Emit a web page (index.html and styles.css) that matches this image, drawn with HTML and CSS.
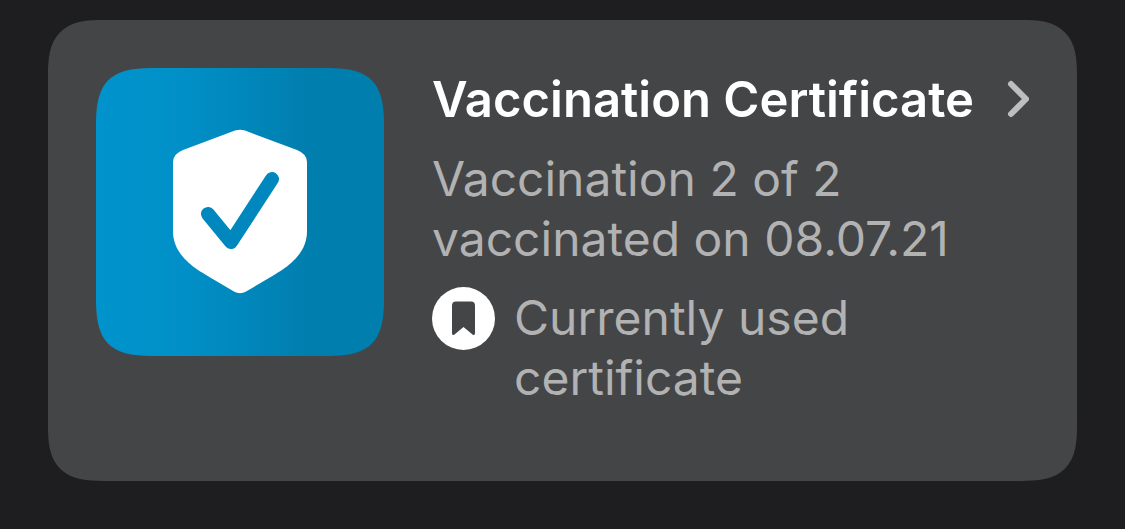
FILE: index.html
```
<!DOCTYPE html>
<html lang="en">
<head>
    <meta charset="utf-8">
    <title>Vaccination Certificate</title>
    <link rel="stylesheet" href="styles.css">
</head>
<body>
    <a class="card" href="#certificate">
        <svg class="tile" viewBox="0 0 288 288" aria-hidden="true">
            <defs>
                <linearGradient id="tileBlue" x1="0" y1="0" x2="1" y2="0">
                    <stop offset="0" stop-color="#0094cc"/>
                    <stop offset="0.3" stop-color="#0090c7"/>
                    <stop offset="0.75" stop-color="#007eae"/>
                    <stop offset="1" stop-color="#007eae"/>
                </linearGradient>
            </defs>
            <path fill="url(#tileBlue)" d="M56 0H232C274 0 288 14 288 56V232C288 274 274 288 232 288H56C14 288 0 274 0 232V56C0 14 14 0 56 0Z"/>
            <path fill="#fff" d="M139 62.500Q144 61 149 62.500L201 82Q211 86 211 94V163C211 179 202 191 186 202Q180 206 150 223.500Q144 227 138 223.500Q108 206 102 202C86 191 77 179 77 163V94Q77 86 87 82Z"/>
            <path fill="none" stroke="#0087bd" stroke-width="14" stroke-linecap="round" stroke-linejoin="round" d="M112 146L135 174L176 111"/>
        </svg>
        <div class="info">
            <div class="head">
                <h1>Vaccination Certificate</h1>
                <svg class="chevron" viewBox="0 0 24 40" aria-hidden="true">
                    <path fill="none" stroke="#bebebf" stroke-width="6" stroke-linecap="round" stroke-linejoin="round" d="M6 4L21 19L6 34"/>
                </svg>
            </div>
            <p class="details">Vaccination 2 of 2<br>vaccinated on 08.07.21</p>
            <div class="current">
                <svg class="badge" viewBox="0 0 63 63" aria-hidden="true">
                    <circle cx="31.500" cy="31.500" r="31.500" fill="#fff"/>
                    <path fill="#444547" d="M24 14.500H39Q43 14.500 43 18.500V46Q43 49 40.500 47.500L31.500 40L22.500 47.500Q20 49 20 46V18.500Q20 14.500 24 14.500Z"/>
                </svg>
                <p>Currently used<br>certificate</p>
            </div>
        </div>
    </a>
</body>
</html>
```

FILE: styles.css
```
* {
    box-sizing: border-box;
}

body {
    margin: 0;
    padding: 20px 48px 48px;
    background: #1e1e20;
    font-family: Inter, "Liberation Sans", sans-serif;
}

.card {
    display: flex;
    gap: 48px;
    padding: 48px 48px 73px;
    border-radius: 56px;
    corner-shape: superellipse(1.5);
    background: #444547;
    color: #b2b2b3;
    text-decoration: none;
}

.tile {
    flex: none;
    width: 288px;
    height: 288px;
}

.info {
    flex: 1;
    min-width: 0;
    padding-top: 2px;
    white-space: nowrap;
}

.head {
    display: flex;
    align-items: center;
    justify-content: space-between;
}

h1,
p {
    margin: 0;
    font-size: 48px;
    line-height: 60px;
    font-weight: 400;
}

h1 {
    color: #fff;
    font-size: 49px;
    font-weight: 600;
}

.chevron {
    flex: none;
    width: 24px;
    height: 40px;
}

.details {
    margin-top: 19px;
}

.current {
    display: flex;
    gap: 19px;
    margin-top: 18px;
}

.current p {
    padding-top: 1px;
}

.badge {
    flex: none;
    width: 63px;
    height: 63px;
}
```
